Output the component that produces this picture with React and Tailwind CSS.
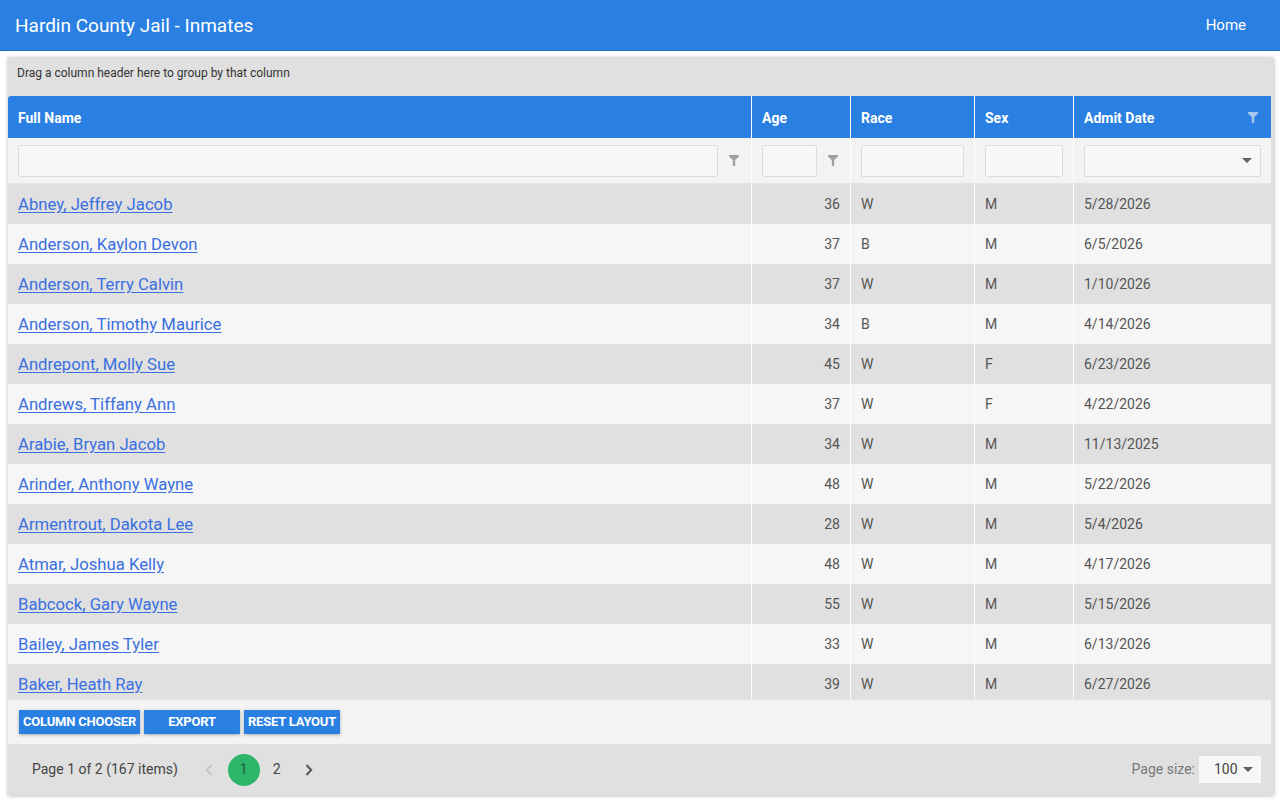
import React from "react";

const inmates = [
  ["Abney, Jeffrey Jacob", 36, "W", "M", "5/28/2026"],
  ["Anderson, Kaylon Devon", 37, "B", "M", "6/5/2026"],
  ["Anderson, Terry Calvin", 37, "W", "M", "1/10/2026"],
  ["Anderson, Timothy Maurice", 34, "B", "M", "4/14/2026"],
  ["Andrepont, Molly Sue", 45, "W", "F", "6/23/2026"],
  ["Andrews, Tiffany Ann", 37, "W", "F", "4/22/2026"],
  ["Arabie, Bryan Jacob", 34, "W", "M", "11/13/2025"],
  ["Arinder, Anthony Wayne", 48, "W", "M", "5/22/2026"],
  ["Armentrout, Dakota Lee", 28, "W", "M", "5/4/2026"],
  ["Atmar, Joshua Kelly", 48, "W", "M", "4/17/2026"],
  ["Babcock, Gary Wayne", 55, "W", "M", "5/15/2026"],
  ["Bailey, James Tyler", 33, "W", "M", "6/13/2026"],
  ["Baker, Heath Ray", 39, "W", "M", "6/27/2026"],
];

const cols = "grid grid-cols-[743px_99px_124px_99px_1fr]";

const Funnel = ({ color = "#a0a0a0" }) => (
  <svg width="10" height="11" viewBox="0 0 10 11">
    <path d="M0 0 H10 V1.5 L6.2 5 V11 H3.8 V5 L0 1.5 Z" fill={color} />
  </svg>
);

const Caret = () => (
  <svg width="10" height="5" viewBox="0 0 10 5">
    <path d="M0 0 H10 L5 5 Z" fill="#606060" />
  </svg>
);

const Chevron = ({ dir, color }) => (
  <svg width="8" height="12" viewBox="0 0 8 12">
    <path
      d={dir === "left" ? "M6.5 1 L1.8 6 L6.5 11" : "M1.5 1 L6.2 6 L1.5 11"}
      fill="none"
      stroke={color}
      strokeWidth="2"
    />
  </svg>
);

const App = () => {
  return (
    <div className="w-[1280px] h-[800px] bg-white overflow-hidden font-['Roboto',sans-serif]">
      {/* Top bar */}
      <div className="h-[51px] bg-[#2a80e2] flex items-center justify-between pl-[15px] pr-[34px] border-b border-[#1f6cc4]">
        <span className="text-white text-[19px] font-normal pt-[2px]">Hardin County Jail - Inmates</span>
        <span className="text-white text-[15px]">Home</span>
      </div>

      {/* Grid */}
      <div className="mt-[6px] ml-[7px] w-[1266px] h-[738px] bg-[#e0e0e0] shadow-[1px_1px_4px_rgba(0,0,0,0.25)] flex flex-col">
        {/* Group panel */}
        <div className="h-[39px] pt-[7px] pl-[10px] text-[12px] text-[#333]">
          Drag a column header here to group by that column
        </div>

        {/* Header row */}
        <div className={`${cols} h-[42px] bg-[#2a80e2] text-white text-[14px] font-bold ml-px mr-[2px] rounded-tl-[3px]`}>
          <div className="flex items-center pl-[10px] pt-[2px]">Full Name</div>
          <div className="flex items-center pl-[10px] pt-[2px] border-l border-white">Age</div>
          <div className="flex items-center pl-[10px] pt-[2px] border-l border-white">Race</div>
          <div className="flex items-center pl-[10px] pt-[2px] border-l border-white">Sex</div>
          <div className="flex items-center justify-between pl-[10px] pr-[13px] border-l border-white">
            <span className="pt-[2px]">Admit Date</span>
            <Funnel color="#a9c7ee" />
          </div>
        </div>

        {/* Filter row */}
        <div className={`${cols} h-[46px] bg-[#f3f3f3] ml-px mr-[2px] border-b border-[#e4e4e4]`}>
          <div className="flex items-center pl-[10px] pr-[12px] gap-[11px]">
            <div className="flex-1 h-[32px] bg-[#f7f7f7] border border-[#dcdcdc] rounded-[2px]" />
            <Funnel />
          </div>
          <div className="flex items-center pl-[10px] pr-[12px] gap-[11px] border-l border-white">
            <div className="flex-1 h-[32px] bg-[#f7f7f7] border border-[#dcdcdc] rounded-[2px]" />
            <Funnel />
          </div>
          <div className="flex items-center pl-[10px] pr-[10px] border-l border-white">
            <div className="flex-1 h-[32px] bg-[#f7f7f7] border border-[#dcdcdc] rounded-[2px]" />
          </div>
          <div className="flex items-center pl-[10px] pr-[10px] border-l border-white">
            <div className="flex-1 h-[32px] bg-[#f7f7f7] border border-[#dcdcdc] rounded-[2px]" />
          </div>
          <div className="flex items-center pl-[10px] pr-[10px] border-l border-white">
            <div className="flex-1 h-[32px] bg-[#f7f7f7] border border-[#dcdcdc] rounded-[2px] flex items-center justify-end pr-[8px]">
              <Caret />
            </div>
          </div>
        </div>

        {/* Data rows */}
        <div className="h-[515px] overflow-hidden ml-px mr-[2px]">
          {inmates.map(([name, age, race, sex, date], i) => (
            <div
              key={name}
              className={`${cols} h-[40px] text-[14px] text-[#555] ${i % 2 === 0 ? "bg-[#e0e0e0]" : "bg-[#f6f6f6]"}`}
            >
              <div className="flex items-center pl-[10px]">
                <a href="#" className="text-[16.7px] text-[#3a6fe0] underline underline-offset-2 pt-px">
                  {name}
                </a>
              </div>
              <div className="flex items-center justify-end pr-[10px] border-l border-white">{age}</div>
              <div className="flex items-center pl-[10px] border-l border-white">{race}</div>
              <div className="flex items-center pl-[10px] border-l border-white">{sex}</div>
              <div className="flex items-center pl-[10px] border-l border-white">{date}</div>
            </div>
          ))}
        </div>

        {/* Toolbar */}
        <div className="h-[45px] bg-[#f3f3f3] flex items-center gap-[4px] pl-[11px] ml-px mr-[2px] border-t border-[#e6e6e6]">
          <button className="h-[24px] w-[121px] bg-[#2a80e2] text-white text-[13px] font-bold tracking-[-0.2px] shadow-[0_1px_3px_rgba(0,0,0,0.3)]">
            COLUMN CHOOSER
          </button>
          <button className="h-[24px] w-[96px] bg-[#2a80e2] text-white text-[13px] font-bold tracking-[-0.2px] shadow-[0_1px_3px_rgba(0,0,0,0.3)]">
            EXPORT
          </button>
          <button className="h-[24px] w-[96px] bg-[#2a80e2] text-white text-[13px] font-bold tracking-[-0.2px] shadow-[0_1px_3px_rgba(0,0,0,0.3)]">
            RESET LAYOUT
          </button>
        </div>

        {/* Pager */}
        <div className="flex-1 flex items-center justify-between pl-[25px] pr-[12px]">
          <div className="flex items-center">
            <span className="text-[14px] text-[#444]">Page 1 of 2 (167 items)</span>
            <div className="ml-[27px] flex items-center">
              <Chevron dir="left" color="#c6c6c6" />
              <div className="ml-[15px] w-[32px] h-[32px] rounded-full bg-[#2db56a] flex items-center justify-center text-[14px] text-[#1d5f3a]">
                1
              </div>
              <span className="ml-[13px] text-[14px] text-[#444]">2</span>
              <div className="ml-[24px]">
                <Chevron dir="right" color="#555" />
              </div>
            </div>
          </div>
          <div className="flex items-center">
            <span className="text-[14px] text-[#777]">Page size:</span>
            <div className="ml-[4px] w-[62px] h-[27px] bg-[#f7f7f7] flex items-center justify-between pl-[15px] pr-[8px]">
              <span className="text-[14px] text-[#444]">100</span>
              <Caret />
            </div>
          </div>
        </div>
      </div>
    </div>
  );
};

export default App;
